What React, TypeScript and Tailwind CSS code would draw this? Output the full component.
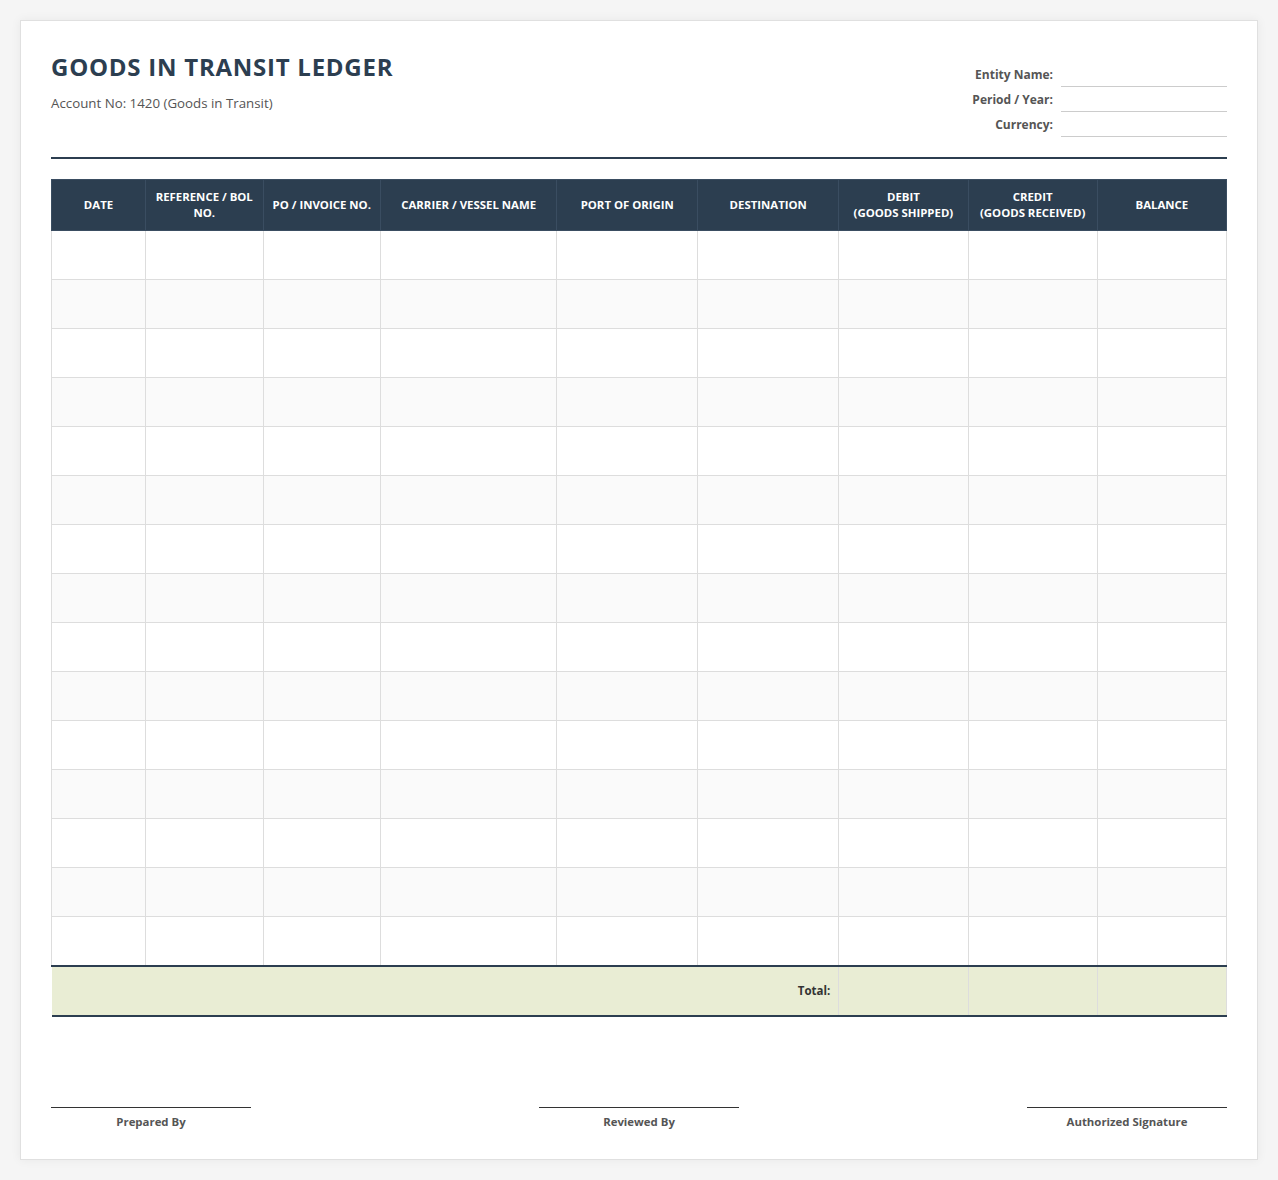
const columns = [
  { label: ["DATE"], w: "w-[8%]" },
  { label: ["REFERENCE / BOL NO."], w: "w-[10%]" },
  { label: ["PO / INVOICE NO."], w: "w-[10%]" },
  { label: ["CARRIER / VESSEL NAME"], w: "w-[15%]" },
  { label: ["PORT OF ORIGIN"], w: "w-[12%]" },
  { label: ["DESTINATION"], w: "w-[12%]" },
  { label: ["DEBIT", "(GOODS SHIPPED)"], w: "w-[11%]" },
  { label: ["CREDIT", "(GOODS RECEIVED)"], w: "w-[11%]" },
  { label: ["BALANCE"], w: "w-[11%]" },
];

const fields = ["Entity Name:", "Period / Year:", "Currency:"];
const signatures = ["Prepared By", "Reviewed By", "Authorized Signature"];
const rows = Array.from({ length: 15 }, (_, i) => i);

function App() {
  return (
    <div className="min-h-screen bg-[#f5f5f5] p-5 font-['Open_Sans',sans-serif] text-[#333]">
      <div className="bg-white border border-[#e0e0e0] shadow-[0_0_10px_rgba(0,0,0,0.06)] px-[30px] pt-[30px] pb-[29px]">
        {/* Header */}
        <header className="flex justify-between items-start pb-5 border-b-2 border-[#2c3e50] mb-5">
          <div>
            <h1 className="text-[24px] leading-[32px] font-bold tracking-[0.75px] text-[#2c3e50]">
              GOODS IN TRANSIT LEDGER
            </h1>
            <p className="mt-[11px] text-[13.3px] leading-[18px] text-[#555]">
              Account No: 1420 (Goods in Transit)
            </p>
          </div>
          <div className="flex flex-col gap-[5px] pt-[16px]">
            {fields.map((f) => (
              <div key={f} className="flex items-end gap-2 justify-end">
                <span className="text-[12px] leading-4 mb-[4px] font-bold text-[#555]">{f}</span>
                <div className="w-[166px] h-[20px] border-b border-[#ccc]" />
              </div>
            ))}
          </div>
        </header>

        {/* Ledger table */}
        <table className="w-full table-fixed border-collapse">
          <thead>
            <tr className="bg-[#2c3e50] text-white">
              {columns.map((c, i) => (
                <th
                  key={i}
                  className={`${c.w} h-[50px] px-2 py-[9px] border border-[#3a4d61] text-[11.4px] leading-[16px] font-bold text-center align-middle`}
                >
                  {c.label.map((l, j) => (
                    <div key={j}>{l}</div>
                  ))}
                </th>
              ))}
            </tr>
          </thead>
          <tbody>
            {rows.map((r) => (
              <tr key={r} className={r % 2 === 1 ? "bg-[#fafafa]" : "bg-white"}>
                {columns.map((_, i) => (
                  <td key={i} className="h-[49px] border border-[#ddd]" />
                ))}
              </tr>
            ))}
            <tr className="bg-[#e9edd4]">
              <td
                colSpan={6}
                className="h-[50px] border-t-2 border-b-2 border-[#2c3e50] text-right pr-2 text-[11.5px] font-bold text-[#333]"
              >
                Total:
              </td>
              <td className="border-l border-r border-[#ddd] border-t-2 border-b-2 border-t-[#2c3e50] border-b-[#2c3e50]" />
              <td className="border-l border-r border-[#ddd] border-t-2 border-b-2 border-t-[#2c3e50] border-b-[#2c3e50]" />
              <td className="border-l border-r border-[#ddd] border-t-2 border-b-2 border-t-[#2c3e50] border-b-[#2c3e50]" />
            </tr>
          </tbody>
        </table>

        {/* Signatures */}
        <div className="flex justify-between mt-[90px]">
          {signatures.map((s) => (
            <div key={s} className="w-[200px] border-t border-[#333] pt-[6px] text-center text-[11.4px] leading-4 font-bold text-[#555]">
              {s}
            </div>
          ))}
        </div>
      </div>
    </div>
  );
}

export default App;
